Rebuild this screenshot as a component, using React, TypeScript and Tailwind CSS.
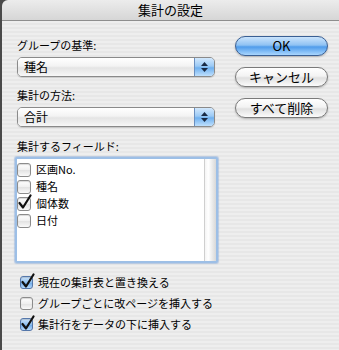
const font = "font-['Noto_Sans_CJK_JP',sans-serif]";

function Check({ checked, blue, big }: { checked?: boolean; blue?: boolean; big?: boolean }) {
  return (
    <span className={"relative inline-block shrink-0 " + (big ? "w-[14px] h-[14px]" : "w-[13px] h-[13px]")}>
      <span
        className={
          "absolute inset-0 rounded-[3px] border shadow-[inset_0_1px_1px_rgba(0,0,0,0.15)] " +
          (blue
            ? "border-[#5577aa] bg-[linear-gradient(to_bottom,#cfe5fb,#8fc0f0_50%,#6ba9ea_51%,#b7dafc)]"
            : "border-[#8c8c8c] bg-[linear-gradient(to_bottom,#ffffff,#f0f0f0_50%,#e2e2e2_51%,#fafafa)]")
        }
      />
      {checked && (
        <svg className="absolute left-[1px] top-[-3px]" width="14" height="16" viewBox="0 0 14 16">
          <path d="M1.5 9 L5 13.5 L12.5 1.5" fill="none" stroke="#111" strokeWidth="2.2" strokeLinecap="round" strokeLinejoin="round" />
        </svg>
      )}
    </span>
  );
}

function Popup({ value }: { value: string }) {
  return (
    <div className="flex h-[20px] w-[198px] rounded-[5px] border border-[#8a8a8a] overflow-hidden shadow-[0_1px_1px_rgba(0,0,0,0.15)]">
      <div className="flex-1 flex items-center pl-[6px] text-[12px] text-black bg-[linear-gradient(to_bottom,#ffffff,#f3f3f3_45%,#e4e4e4_55%,#f7f7f7)]">
        {value}
      </div>
      <div className="w-[20px] flex flex-col items-center justify-center gap-[2px] border-l border-[#6a8fbf] bg-[linear-gradient(to_bottom,#d2e8fd,#9ccaf5_45%,#6fb0ef_55%,#bfe0fd)]">
        <svg width="7" height="4" viewBox="0 0 7 4"><path d="M3.5 0 L7 4 L0 4 Z" fill="#1a2a44" /></svg>
        <svg width="7" height="4" viewBox="0 0 7 4"><path d="M0 0 L7 0 L3.5 4 Z" fill="#1a2a44" /></svg>
      </div>
    </div>
  );
}

function Button({ label, primary }: { label: string; primary?: boolean }) {
  return (
    <div
      className={
        "h-[20px] w-[93px] rounded-full border flex items-center justify-center text-[13px] text-black shadow-[0_1px_2px_rgba(0,0,0,0.25)] " +
        (primary
          ? "border-[#3a5f93] bg-[linear-gradient(to_bottom,#cbe4fc,#8fc2f3_45%,#4f9ceb_55%,#a9d6fe)]"
          : "border-[#7a7a7a] bg-[linear-gradient(to_bottom,#ffffff,#f3f3f3_45%,#e0e0e0_55%,#fbfbfb)]")
      }
    >
      {label}
    </div>
  );
}

export default function App() {
  const fields = [
    { name: "区画No.", checked: false },
    { name: "種名", checked: false },
    { name: "個体数", checked: true },
    { name: "日付", checked: false },
  ];

  return (
    <div className={"w-[339px] h-[350px] bg-[#4a4a4a] pl-[2px] overflow-hidden " + font}>
      <div className="h-full flex flex-col rounded-tl-[6px] overflow-hidden">
        <div className="h-[21px] shrink-0 flex items-center justify-center text-[13px] text-black border-b border-[#8e8e8e] bg-[linear-gradient(to_bottom,#ececec,#d6d6d6)]">
          集計の設定
        </div>
        <div className="flex-1 flex bg-[repeating-linear-gradient(180deg,#eeeeee_0px,#eeeeee_2px,#e7e7e7_2px,#e7e7e7_4px)]">
          <div className="flex flex-col pl-[15px] pt-[17px] w-[218px]">
            <div className="h-[14px] leading-[14px] text-[11px] text-black">グループの基準:</div>
            <div className="mt-[5px]">
              <Popup value="種名" />
            </div>
            <div className="mt-[11px] h-[14px] leading-[14px] text-[11px] text-black">集計の方法:</div>
            <div className="mt-[5px]">
              <Popup value="合計" />
            </div>
            <div className="mt-[12px] h-[14px] leading-[14px] text-[11px] text-black">集計するフィールド:</div>
            <div className="mt-[4px] ml-[-2px] h-[106px] w-[203px] border-2 border-[#9dbfe6] shadow-[0_0_1px_1px_rgba(120,160,215,0.45)] rounded-[2px] bg-white flex">
              <div className="flex-1 flex flex-col pt-[2px]">
                {fields.map((f) => (
                  <div key={f.name} className="h-[17px] flex items-center gap-[5px] text-[11px] text-black">
                    <Check checked={f.checked} big />
                    <span>{f.name}</span>
                  </div>
                ))}
              </div>
              <div className="w-[12px] border-l border-[#cfcfcf] bg-[linear-gradient(to_right,#f4f4f4,#ffffff_30%,#d8d8d8)]" />
            </div>
            <div className="mt-[12px] flex flex-col gap-[7px] pl-[3px]">
              <div className="h-[14px] flex items-center gap-[5px] text-[11px] text-black">
                <Check checked blue />
                <span>現在の集計表と置き換える</span>
              </div>
              <div className="h-[14px] flex items-center gap-[5px] text-[11px] text-black">
                <Check />
                <span>グループごとに改ページを挿入する</span>
              </div>
              <div className="h-[14px] flex items-center gap-[5px] text-[11px] text-black">
                <Check checked blue />
                <span>集計行をデータの下に挿入する</span>
              </div>
            </div>
          </div>
          <div className="flex flex-col pl-[15px] pt-[15px] gap-[11px]">
            <Button label="OK" primary />
            <Button label="キャンセル" />
            <Button label="すべて削除" />
          </div>
        </div>
      </div>
    </div>
  );
}
